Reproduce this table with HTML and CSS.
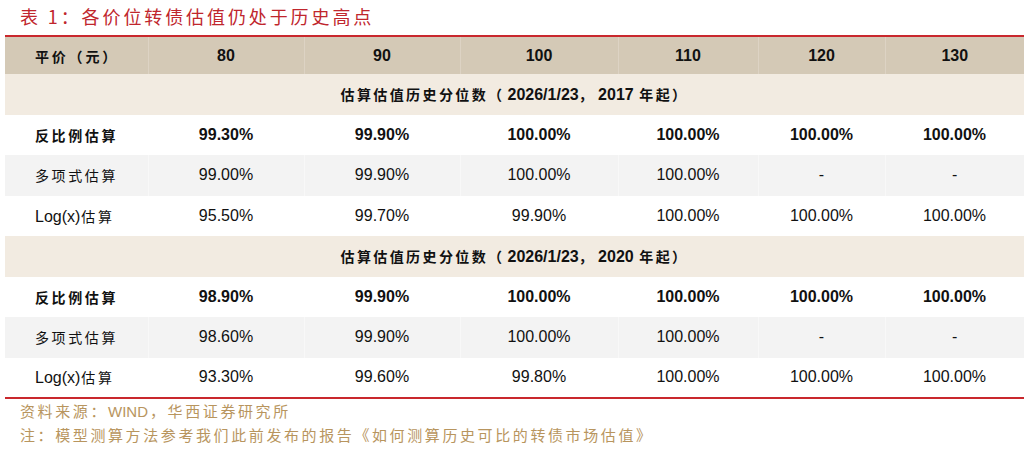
FILE: index.html
```html
<!DOCTYPE html>
<html lang="zh-CN">
<head>
<meta charset="utf-8">
<title>表 1：各价位转债估值仍处于历史高点</title>
<link rel="stylesheet" href="styles.css">
</head>
<body>
<div class="page">
  <h1 class="title">表 1：各价位转债估值仍处于历史高点</h1>
  <table class="tbl">
    <colgroup>
      <col class="c0"><col class="c1"><col class="c2"><col class="c3"><col class="c4"><col class="c5"><col class="c6">
    </colgroup>
    <thead>
      <tr class="head">
        <th class="lbl">平价（元）</th><th>80</th><th>90</th><th>100</th><th>110</th><th>120</th><th>130</th>
      </tr>
    </thead>
    <tbody>
      <tr class="sec"><td colspan="7">估算估值历史分位数（<span class="num">2026/1/23</span>，<span class="num">2017</span> 年起）</td></tr>
      <tr class="bold"><td class="lbl">反比例估算</td><td>99.30%</td><td>99.90%</td><td>100.00%</td><td>100.00%</td><td>100.00%</td><td>100.00%</td></tr>
      <tr class="gray"><td class="lbl">多项式估算</td><td>99.00%</td><td>99.90%</td><td>100.00%</td><td>100.00%</td><td>-</td><td>-</td></tr>
      <tr><td class="lbl"><span class="lat">Log(x)</span>估算</td><td>95.50%</td><td>99.70%</td><td>99.90%</td><td>100.00%</td><td>100.00%</td><td>100.00%</td></tr>
      <tr class="sec"><td colspan="7">估算估值历史分位数（<span class="num">2026/1/23</span>，<span class="num">2020</span> 年起）</td></tr>
      <tr class="bold"><td class="lbl">反比例估算</td><td>98.90%</td><td>99.90%</td><td>100.00%</td><td>100.00%</td><td>100.00%</td><td>100.00%</td></tr>
      <tr class="gray"><td class="lbl">多项式估算</td><td>98.60%</td><td>99.90%</td><td>100.00%</td><td>100.00%</td><td>-</td><td>-</td></tr>
      <tr><td class="lbl"><span class="lat">Log(x)</span>估算</td><td>93.30%</td><td>99.60%</td><td>99.80%</td><td>100.00%</td><td>100.00%</td><td>100.00%</td></tr>
    </tbody>
  </table>
  <div class="foot">
    <p>资料来源：<span class="wind">WIND</span>，华西证券研究所</p>
    <p>注：模型测算方法参考我们此前发布的报告《如何测算历史可比的转债市场估值》</p>
  </div>
</div>
</body>
</html>
```
FILE: styles.css
```css
html, body {
  margin: 0;
  padding: 0;
  background: #ffffff;
}
.page {
  width: 1029px;
  height: 449px;
  overflow: hidden;
  font-family: "Liberation Sans", "Noto Sans CJK SC", sans-serif;
  color: #111111;
  text-spacing-trim: space-all;
}
.title {
  margin: 0 0 3px 0;
  padding-left: 20px;
  height: 32px;
  line-height: 32px;
  font-family: "Noto Sans CJK SC", sans-serif;
  font-size: 18px;
  font-weight: 400;
  letter-spacing: 2.9px;
  color: #c0262d;
}
.tbl {
  margin-left: 5px;
  width: 1019px;
  table-layout: fixed;
  border-collapse: collapse;
  border-top: 2px solid #c9282d;
  border-bottom: 2px solid #c9282d;
}
.c0 { width: 143px; }
.c1 { width: 156px; }
.c2 { width: 156px; }
.c3 { width: 158px; }
.c4 { width: 140px; }
.c5 { width: 127px; }
.c6 { width: 139px; }
.tbl th, .tbl td {
  padding: 0;
  text-align: center;
  vertical-align: middle;
  font-size: 16px;
  font-weight: 400;
}
.tbl .lbl {
  text-align: left;
  padding-left: 30px;
  font-family: "Noto Sans CJK SC", sans-serif;
  font-size: 14px;
  letter-spacing: 2.6px;
}
.lat {
  font-family: "Liberation Sans", sans-serif;
  font-size: 16px;
  letter-spacing: 0;
  margin-right: 1px;
}
.head {
  height: 38px;
  background: #d4c9b6;
}
.head th {
  font-weight: 700;
  border-left: 1px solid #ddd3c4;
}
.head th.lbl {
  border-left: none;
  font-weight: 700;
  letter-spacing: 2.8px;
}
.tbl tbody tr {
  height: 40.5px;
}
.sec {
  background: #f2ebe1;
}
.sec td {
  font-family: "Noto Sans CJK SC", sans-serif;
  font-size: 14px;
  font-weight: 700;
  letter-spacing: 2.4px;
}
.sec .num {
  font-family: "Liberation Sans", sans-serif;
  font-size: 16px;
  letter-spacing: 0;
  margin-left: 3px;
}
.bold td {
  font-weight: 700;
}
.gray {
  background: #f3f3f3;
}
.gray td + td {
  border-left: 1px solid #f8f8f8;
}
.foot {
  padding-left: 20px;
  font-family: "Noto Sans CJK SC", sans-serif;
  font-size: 15px;
  letter-spacing: 2.6px;
  color: #b8955e;
}
.foot .wind {
  font-family: "Liberation Sans", sans-serif;
  letter-spacing: 0;
  margin-right: 2px;
}
.foot p {
  margin: 0;
  height: 24px;
  line-height: 24px;
  white-space: nowrap;
}
```
